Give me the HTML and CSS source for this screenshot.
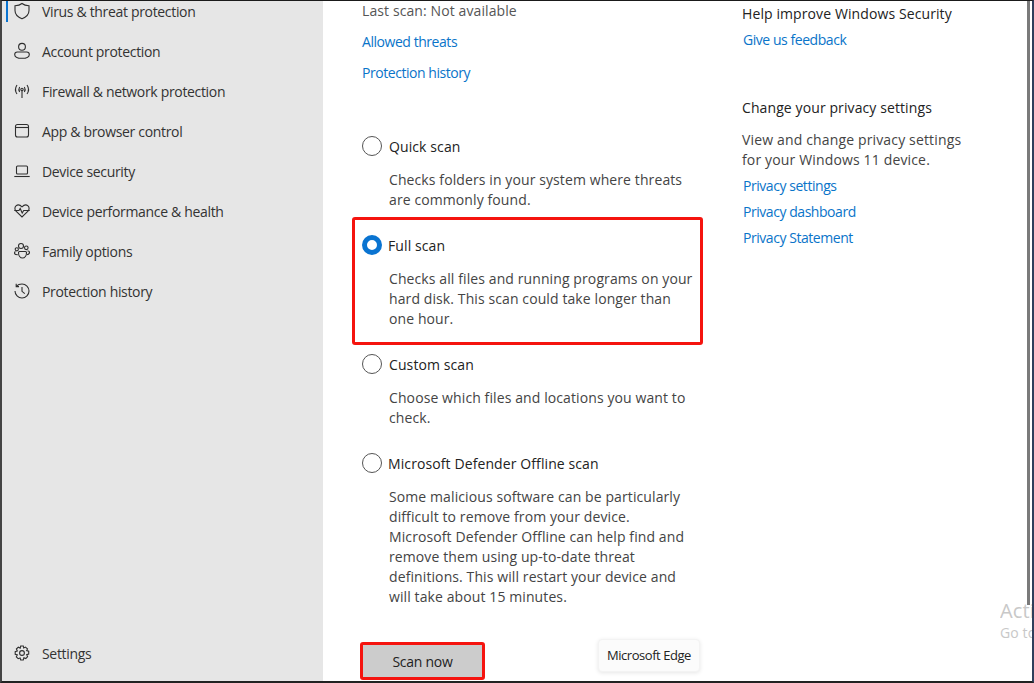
FILE: index.html
```html
<!DOCTYPE html>
<html lang="en">
<head>
  <meta charset="UTF-8">
  <title>Windows Security - Scan options</title>
  <link rel="stylesheet" href="styles.css">
</head>
<body>
  <div class="window">
    <!-- Sidebar -->
    <nav class="sidebar">
      <ul class="nav-list">
        <li class="nav-item active">
          <svg class="nav-icon" viewBox="0 0 16 16"><path d="M8 0.5C6.2 2 4 2.7 1 2.8V7.5C1 11.2 3.6 14 8 15.8C12.4 14 15 11.2 15 7.5V2.8C12 2.7 9.8 2 8 0.5Z"/></svg>
          Virus &amp; threat protection
        </li>
        <li class="nav-item">
          <svg class="nav-icon" viewBox="0 0 16 16"><circle cx="8" cy="3.8" r="3.4"/><path d="M3.4 9H12.6C14.2 9 15.3 10 15.3 11.4C15.3 13.8 12.2 15.3 8 15.3C3.8 15.3 0.7 13.8 0.7 11.4C0.7 10 1.8 9 3.4 9Z"/></svg>
          Account protection
        </li>
        <li class="nav-item">
          <svg class="nav-icon" viewBox="0 0 16 16"><circle cx="8" cy="6.5" r="1.2"/><path d="M8 7.5V15M5.6 9C4.8 7.6 4.8 5.4 5.6 4M10.4 4C11.2 5.4 11.2 7.6 10.4 9M3 11C1.2 8.4 1.2 4.6 3 2M13 2C14.8 4.6 14.8 8.4 13 11"/></svg>
          Firewall &amp; network protection
        </li>
        <li class="nav-item">
          <svg class="nav-icon" viewBox="0 0 16 16"><rect x="1.5" y="1.5" width="13" height="12.5" rx="2"/><path d="M1.5 4.5H14.5"/></svg>
          App &amp; browser control
        </li>
        <li class="nav-item">
          <svg class="nav-icon" viewBox="0 0 16 16"><rect x="2.5" y="3" width="11" height="8" rx="1"/><path d="M0.3 13.5H15.7"/></svg>
          Device security
        </li>
        <li class="nav-item">
          <svg class="nav-icon" viewBox="0 0 16 16"><path d="M2 8.2C0.6 6.6 0.5 4.2 2 2.9C3.6 1.5 6 1.8 8 3.8C10 1.8 12.4 1.5 14 2.9C15.5 4.2 15.4 6.6 14 8.2L8 14L2 8.2Z"/><path d="M0.3 7.5H5L6.2 5.5L8.2 10L9.7 7.5H15.7"/></svg>
          Device performance &amp; health
        </li>
        <li class="nav-item">
          <svg class="nav-icon" viewBox="0 0 16 16"><circle cx="7" cy="3" r="2.5"/><circle cx="12.3" cy="4.8" r="1.8"/><circle cx="2.8" cy="6.3" r="1.6"/><path d="M5.5 8.5H11.5C12.2 8.5 12.5 9 12.5 9.5C12.5 12.5 10.8 15 8.5 15C6.2 15 4.5 12.5 4.5 9.5C4.5 9 4.8 8.5 5.5 8.5Z"/><path d="M13.5 8H14C15 8 15.5 8.6 15.5 9.3C15.5 10.6 14.6 11.5 12.8 11.7M1.5 8.5C0.9 8.8 0.5 9.3 0.5 10C0.5 11 1.6 11.8 3.8 11.8"/></svg>
          Family options
        </li>
        <li class="nav-item">
          <svg class="nav-icon" viewBox="0 0 16 16"><path d="M2.4 3.2C3.7 1.9 5.7 1 8 1C11.9 1 15 4.1 15 8C15 11.9 11.9 15 8 15C4.1 15 1 11.9 1 8"/><path d="M2.2 0.8V3.6H5M8 4V8.3L10.8 10.6"/></svg>
          Protection history
        </li>
      </ul>
      <div class="nav-item settings">
        <svg class="nav-icon" viewBox="0 0 16 16"><circle cx="8" cy="8" r="2.4"/><path d="M6.7 1H9.3L9.7 3L11.4 2.1L13.5 3.9L12.6 5.6L14.7 6.2V9L12.7 9.6L13.6 11.6L11.8 13.6L9.9 12.7L9.3 15H6.7L6.1 12.9L4.2 13.7L2.3 11.8L3.3 9.9L1.2 9.3V6.6L3.3 6L2.4 4L4.3 2.2L6.2 3.1L6.7 1Z"/></svg>
        Settings
      </div>
    </nav>

    <!-- Scan options -->
    <main class="content">
      <p class="last-scan">Last scan: Not available</p>
      <a class="link allowed-link">Allowed threats</a>
      <a class="link history-link">Protection history</a>

      <section class="scan-option quick">
        <div class="scan-title"><span class="radio"></span>Quick scan</div>
        <p class="scan-desc">Checks folders in your system where threats<br>are commonly found.</p>
      </section>

      <section class="scan-option marked">
        <div class="scan-title"><span class="radio checked"></span>Full scan</div>
        <p class="scan-desc">Checks all files and running programs on your<br>hard disk. This scan could take longer than<br>one hour.</p>
      </section>

      <section class="scan-option custom">
        <div class="scan-title"><span class="radio"></span>Custom scan</div>
        <p class="scan-desc">Choose which files and locations you want to<br>check.</p>
      </section>

      <section class="scan-option offline">
        <div class="scan-title"><span class="radio"></span>Microsoft Defender Offline scan</div>
        <p class="scan-desc">Some malicious software can be particularly<br>difficult to remove from your device.<br>Microsoft Defender Offline can help find and<br>remove them using up-to-date threat<br>definitions. This will restart your device and<br>will take about 15 minutes.</p>
      </section>

      <button class="scan-button" type="button">Scan now</button>
      <div class="tooltip">Microsoft Edge</div>
    </main>

    <!-- Right column -->
    <aside class="side-panel">
      <h2 class="side-title">Help improve Windows Security</h2>
      <a class="link feedback-link">Give us feedback</a>
      <h2 class="side-title privacy-title">Change your privacy settings</h2>
      <p class="side-text">View and change privacy settings<br>for your Windows 11 device.</p>
      <a class="link">Privacy settings</a>
      <a class="link">Privacy dashboard</a>
      <a class="link">Privacy Statement</a>
    </aside>

    <div class="scrollbar"></div>
    <div class="watermark">
      <div class="watermark-big">Activate Windows</div>
      <div class="watermark-small">Go to Settings</div>
    </div>
  </div>
</body>
</html>
```

FILE: styles.css
```css
* {
  box-sizing: border-box;
}

html, body {
  margin: 0;
  padding: 0;
}

body {
  width: 1034px;
  height: 683px;
  overflow: hidden;
  font-family: "Open Sans", "Noto Sans", sans-serif;
  font-size: 14px;
  letter-spacing: 0.1px;
  color: #2b2b2b;
  background: #fff;
}

.window {
  position: relative;
  display: flex;
  width: 1034px;
  height: 683px;
  overflow: hidden;
  background: #fff;
  border-top: 1px solid #1a1a1a;
  border-left: 2px solid #444;
  border-right: 2px solid #2f3f5c;
  border-bottom: 2px solid #222;
}

/* Sidebar */
.sidebar {
  flex: none;
  display: flex;
  flex-direction: column;
  justify-content: space-between;
  width: 321px;
  background: #e6e6e6;
}

.nav-list {
  list-style: none;
  margin: -10px 0 0;
  padding: 0;
}

.nav-item {
  position: relative;
  display: flex;
  align-items: center;
  height: 40px;
  padding-left: 12px;
  letter-spacing: -0.33px;
  color: #333;
}

.nav-item.active::before {
  content: "";
  position: absolute;
  left: 4px;
  top: 8px;
  bottom: 9px;
  width: 2px;
  background: #0a74d1;
}

.nav-icon {
  flex: none;
  width: 16px;
  height: 16px;
  margin-right: 12px;
  overflow: visible;
  fill: none;
  stroke: #2e2e2e;
  stroke-width: 1.1;
}

.settings {
  margin-bottom: 8px;
}

/* Main column */
.content {
  position: relative;
  flex: none;
  width: 419px;
  padding-left: 39px;
}

.last-scan {
  margin: 0;
  line-height: 20px;
  color: #555;
}

.link {
  display: block;
  line-height: 20px;
  letter-spacing: -0.45px;
  color: #0a74c9;
}

.allowed-link {
  margin-top: 11px;
}

.history-link {
  margin-top: 11px;
}

.scan-option {
  width: 340px;
}

.scan-title {
  display: flex;
  align-items: center;
  height: 22px;
  color: #222;
}

.radio {
  flex: none;
  width: 20px;
  height: 20px;
  margin-right: 7px;
  border: 1px solid #555;
  border-radius: 50%;
  background: #fff;
}

.radio.checked {
  margin-right: 6px;
  border: 5px solid #0a74d1;
}

.offline .radio {
  margin-right: 6px;
}

.scan-desc {
  margin: 13px 0 0 27px;
  line-height: 20px;
  white-space: nowrap;
  color: #444;
}

.quick {
  margin-top: 52px;
}

.marked {
  width: 351px;
  height: 128px;
  margin: 7px 0 0 -10px;
  padding: 14px 0 0 7px;
  border: 3px solid #f5140f;
  border-radius: 3px;
}

.custom {
  margin-top: 8px;
}

.offline {
  margin-top: 24px;
}

.scan-button {
  display: block;
  width: 125px;
  height: 38px;
  margin: 35px 0 0 -2px;
  padding: 1px 0 0;
  border: 3px solid #f5140f;
  border-radius: 3px;
  background: #cccccc;
  font: inherit;
  letter-spacing: -0.25px;
  color: #222;
}

.tooltip {
  position: absolute;
  left: 275px;
  top: 638px;
  width: 102px;
  height: 33px;
  line-height: 30px;
  text-align: center;
  font-size: 13px;
  letter-spacing: -0.45px;
  color: #222;
  background: #fbfbfb;
  border: 1px solid #f3f3f3;
  border-radius: 4px;
  box-shadow: 0 1px 4px rgba(0, 0, 0, 0.1);
}

/* Right column */
.side-panel {
  flex: none;
  width: 280px;
  padding-left: 1px;
}

.side-title {
  margin: 3px 0 0 -1px;
  font-size: 14px;
  font-weight: 400;
  line-height: 20px;
  color: #222;
}

.side-panel .link {
  line-height: 26px;
}

.side-panel .feedback-link {
  margin-top: 3px;
}

.privacy-title {
  margin-top: 45px;
}

.side-text {
  margin: 12px 0 0 -1px;
  line-height: 20px;
  letter-spacing: 0.15px;
  color: #444;
}

.side-text + .link {
  margin-top: 3px;
}

.scrollbar {
  position: absolute;
  right: 2px;
  top: 0;
  width: 3px;
  height: 604px;
  background: #7a7a7a;
}

.watermark {
  position: absolute;
  left: 998px;
  top: 597px;
  width: 32px;
  overflow: hidden;
  white-space: nowrap;
  color: #c8c8c8;
}

.watermark-big {
  font-size: 20px;
  line-height: 26px;
}

.watermark-small {
  font-size: 14px;
  line-height: 18px;
}
```
